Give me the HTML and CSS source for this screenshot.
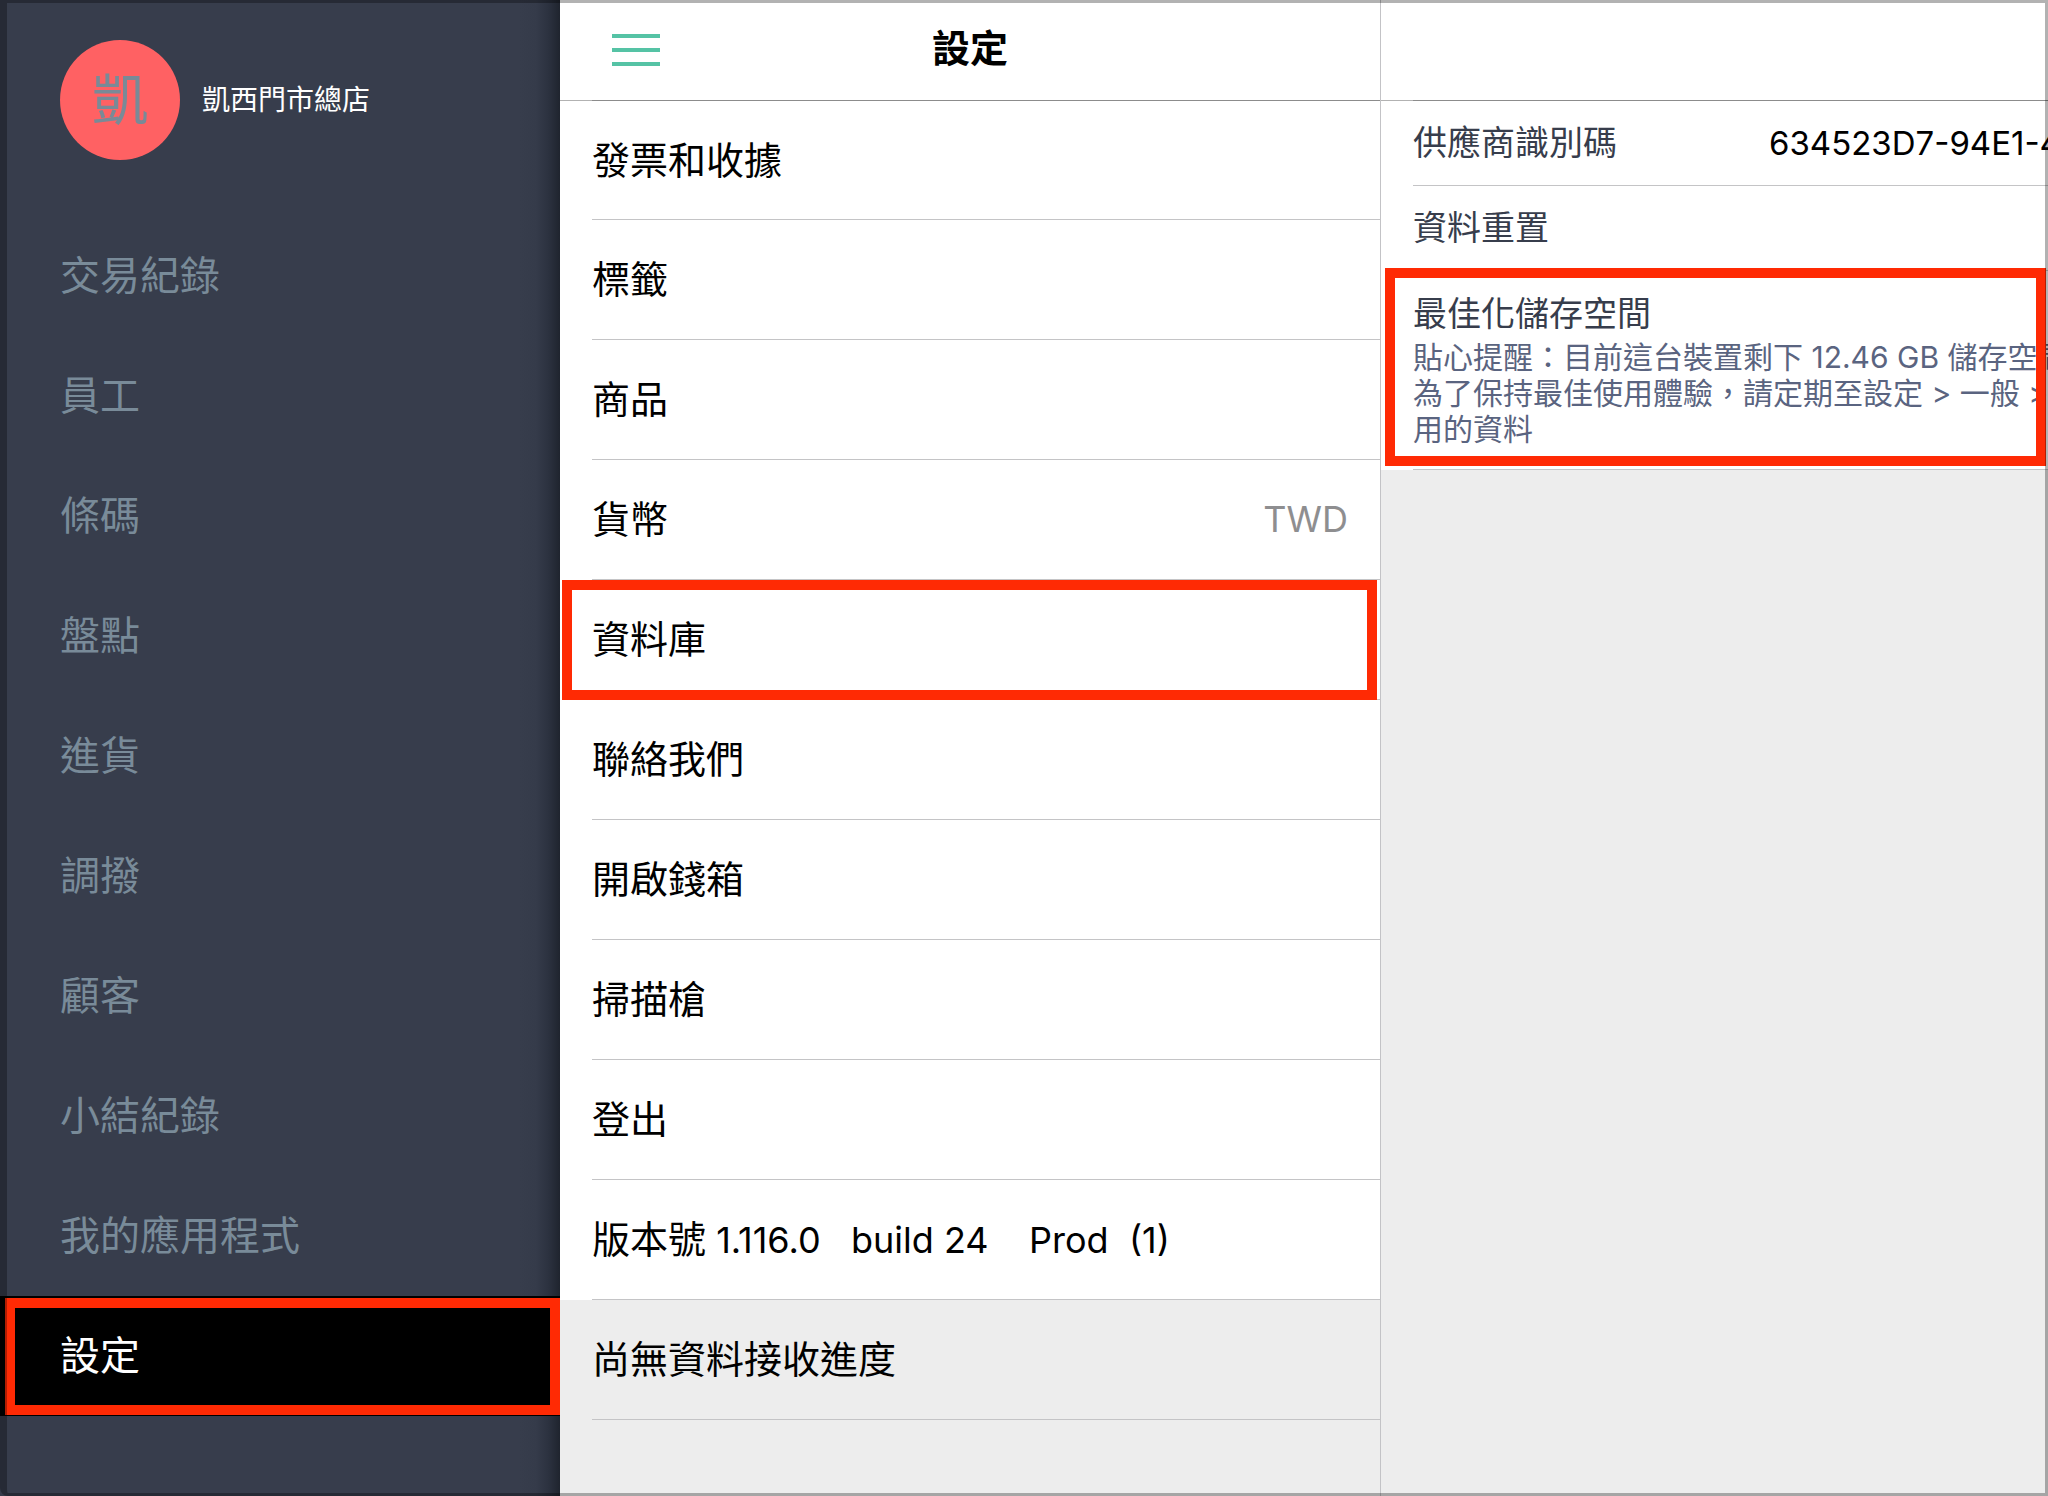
FILE: index.html
```html
<!DOCTYPE html>
<html lang="zh-Hant">
<head>
<meta charset="utf-8">
<title>設定</title>
<meta name="viewport" content="width=device-width, initial-scale=1">
<link rel="stylesheet" href="styles.css">
</head>
<body>
<div class="app">
  <aside class="sidebar">
    <div class="store">
      <span class="avatar">凱</span>
      <span class="store-name">凱西門市總店</span>
    </div>
    <nav class="nav">
      <a class="nav-item" href="#transactions">交易紀錄</a>
      <a class="nav-item" href="#staff">員工</a>
      <a class="nav-item" href="#barcode">條碼</a>
      <a class="nav-item" href="#stocktake">盤點</a>
      <a class="nav-item" href="#purchase">進貨</a>
      <a class="nav-item" href="#transfer">調撥</a>
      <a class="nav-item" href="#customers">顧客</a>
      <a class="nav-item" href="#closing">小結紀錄</a>
      <a class="nav-item" href="#apps">我的應用程式</a>
      <a class="nav-item nav-item-active" href="#settings">設定</a>
    </nav>
  </aside>

  <main class="settings">
    <header class="bar">
      <button class="menu" type="button" aria-label="選單">
        <svg width="48" height="32" viewBox="0 0 48 32" aria-hidden="true"><path d="M0 2h48M0 16h48M0 30h48" stroke="#55c3a5" stroke-width="4"/></svg>
      </button>
      <h1 class="title">設定</h1>
    </header>
    <ul class="list">
      <li><a class="row" href="#invoice">發票和收據</a></li>
      <li><a class="row" href="#label">標籤</a></li>
      <li><a class="row" href="#product">商品</a></li>
      <li><a class="row" href="#currency">貨幣<span class="latin row-value">TWD</span></a></li>
      <li class="marked"><a class="row" href="#database">資料庫</a></li>
      <li><a class="row" href="#contact">聯絡我們</a></li>
      <li><a class="row" href="#drawer">開啟錢箱</a></li>
      <li><a class="row" href="#scanner">掃描槍</a></li>
      <li><a class="row" href="#logout">登出</a></li>
      <li><div class="row"><span>版本號<span class="latin"> 1.116.0   build 24    Prod  (1)</span></span></div></li>
      <li class="muted"><div class="row">尚無資料接收進度</div></li>
    </ul>
  </main>

  <section class="detail">
    <header class="bar"></header>
    <ul class="detail-list">
      <li class="detail-row"><span>供應商識別碼</span><span class="vendor-id">634523D7-94E1-4</span></li>
      <li class="detail-row">資料重置</li>
      <li class="detail-row storage">
        <h2 class="storage-title">最佳化儲存空間</h2>
        <p class="storage-note">貼心提醒：目前這台裝置剩下 12.46 GB 儲存空間<br>為了保持最佳使用體驗，請定期至設定 &gt; 一般 &gt;<br>用的資料</p>
      </li>
    </ul>
  </section>
</div>
<div class="frame"></div>
</body>
</html>
```
FILE: styles.css
```css
* {
  box-sizing: border-box;
}

body {
  margin: 0;
  font-family: Inter, "Noto Sans CJK TC", sans-serif;
  font-size: 38px;
  color: #000;
  background: #ededed;
}

h1, h2, p, ul {
  margin: 0;
  padding: 0;
  font-weight: 400;
}

ul {
  list-style: none;
}

a {
  color: inherit;
  text-decoration: none;
}

.app {
  display: grid;
  grid-template-columns: 560px 821px minmax(0, 1fr);
  min-height: 100vh;
  overflow: hidden;
}

/* Sidebar */
.sidebar {
  background: linear-gradient(to left, #1f242e 0, #2c3240 12px, #353b4a 24px, #373d4c 40px);
}

.store {
  display: flex;
  align-items: center;
  gap: 22px;
  padding: 40px 60px 56px;
}

.avatar {
  width: 120px;
  height: 120px;
  border-radius: 50%;
  background: #ff6163;
  color: #798a97;
  font-size: 56px;
  line-height: 120px;
  text-align: center;
}

.store-name {
  color: #fff;
  font-size: 28px;
  line-height: 40px;
}

.nav-item {
  display: block;
  height: 120px;
  padding-left: 60px;
  font-size: 40px;
  line-height: 120px;
  color: #798b99;
}

.nav-item-active {
  position: relative;
  background: #000;
  color: #fff;
}

.nav-item-active::after {
  content: "";
  position: absolute;
  inset: 2px 0 1px 5px;
  border: 10px solid #ff2a04;
}

/* Title bars */
.bar {
  display: grid;
  grid-template-columns: 1fr auto 1fr;
  align-items: center;
  height: 101px;
  padding-bottom: 1px;
  background: linear-gradient(to right, #b2b2b2 32px, #8c8c8c 32px) bottom / 100% 1px no-repeat #fff;
}

.menu {
  justify-self: start;
  margin-left: 52px;
  padding: 0;
  border: 0;
  background: none;
  line-height: 0;
}

.title {
  padding-bottom: 4px;
  font-size: 38px;
  font-weight: 700;
  line-height: 56px;
}

/* Settings list */
.settings {
  border-right: 1px solid #c3c3c6;
}

.list li {
  padding-left: 32px;
  background: #fff;
}

.list .muted {
  background: #ededed;
}

.row {
  display: flex;
  justify-content: space-between;
  height: 120px;
  padding-right: 32px;
  border-bottom: 1px solid #c4c4c6;
  line-height: 118px;
  white-space: pre;
}

.list li:first-child .row {
  height: 119px;
}

.latin {
  font-size: 36px;
}

.row-value {
  color: #8e8e90;
}

.marked {
  position: relative;
}

.marked::after {
  content: "";
  position: absolute;
  inset: 0 3px 0 2px;
  border: 10px solid #ff2a04;
}

/* Detail column */
.detail-list {
  padding-left: 32px;
  background: #fff;
  color: #373d4c;
  font-size: 34px;
}

.detail-row {
  display: flex;
  gap: 152px;
  border-bottom: 1px solid #c4c4c6;
  line-height: 84px;
  white-space: nowrap;
}

.vendor-id {
  color: #000;
  font-size: 33px;
}

.storage {
  position: relative;
  flex-direction: column;
  gap: 0;
  padding: 18px 0 22px;
}

.storage::after {
  content: "";
  position: absolute;
  inset: -3px 2px 3px -28px;
  border: 10px solid #ff2a04;
}

.storage-title {
  font-size: 34px;
  line-height: 50px;
}

.storage-note {
  color: #5a6480;
  font-size: 30px;
  line-height: 36px;
}

/* Translucent device edge */
.frame {
  position: fixed;
  inset: 0;
  border: 3px solid rgba(0, 0, 0, 0.3);
  border-left-width: 7px;
  border-bottom-left-radius: 8px;
  pointer-events: none;
}
```
